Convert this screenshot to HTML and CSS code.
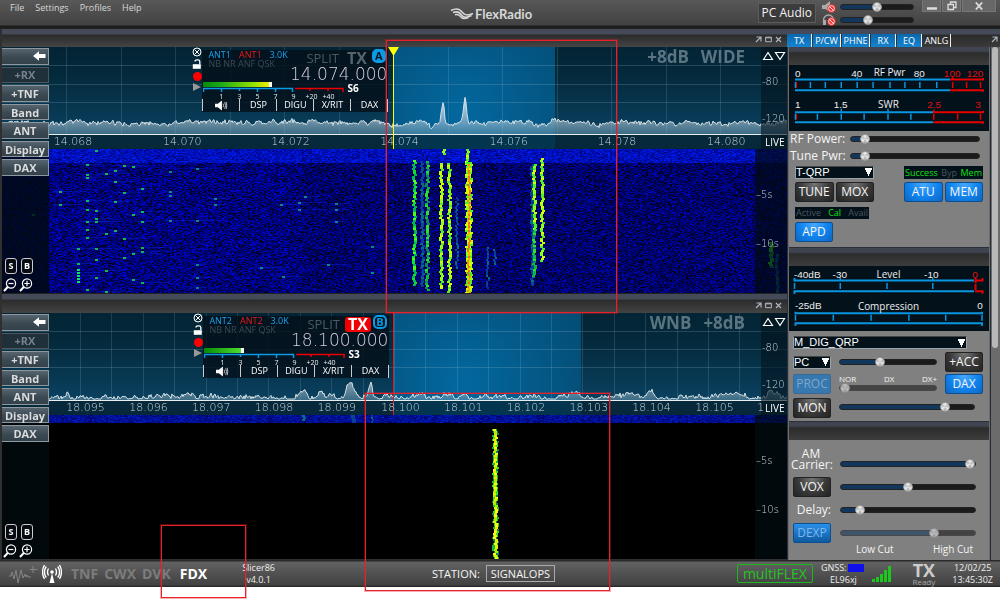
FILE: index.html
```
<!DOCTYPE html>
<html lang="en">
<head>
<meta charset="utf-8">
<title>FlexRadio</title>
<link rel="stylesheet" href="styles.css">
</head>
<body>
<svg class="defs" aria-hidden="true">
  <symbol id="i-pop" viewBox="0 0 7 7"><path d="M1.5 1H6v4.5M6 1 1 6" fill="none" stroke="currentColor" stroke-width="1.2"/></symbol>
  <symbol id="i-max" viewBox="0 0 7 7"><path d="M.6 1.2h5.8v4.5H.6zM.6 1.8h5.8" fill="none" stroke="currentColor"/></symbol>
  <symbol id="i-close" viewBox="0 0 7 7"><path d="M1 1l5 5M6 1 1 6" fill="none" stroke="currentColor" stroke-width="1.2"/></symbol>
  <symbol id="i-arrow" viewBox="0 0 13 10"><path d="M0 5 6 .3V3h6.5v4H6v2.700z" fill="#fff"/></symbol>
  <symbol id="i-x" viewBox="0 0 10 10"><circle cx="5" cy="5" r="4" fill="none" stroke="#fff"/><path d="M2.500 2.500l5 5M7.500 2.500l-5 5" stroke="#fff"/></symbol>
  <symbol id="i-lock" viewBox="0 0 10 10"><path d="M.8 5.200h8v4.600h-8z" fill="#fff"/><path d="M3 2.500Q3 .8 5 .8h1Q7.800.8 7.800 2.600V5" fill="none" stroke="#fff" stroke-width="1.300"/></symbol>
  <symbol id="i-spk" viewBox="0 0 14 12"><path d="M.5 4H3.500L8 .5v11L3.500 8H.5z" fill="#fff"/><path d="M9.300 4q1 2 0 4M11 2.500q2 3.500 0 7M12.600 2q1.400 4 0 8" fill="none" stroke="#ddd" stroke-width=".9"/></symbol>
  <symbol id="i-out" viewBox="0 0 14 14"><circle cx="8" cy="5.500" r="4.600" fill="none" stroke="#fff" stroke-width="1.200"/><path d="M5.500 5.500h5" stroke="#fff" stroke-width="1.200"/><path d="M4.700 9 1 13" stroke="#fff" stroke-width="2"/></symbol>
  <symbol id="i-in" viewBox="0 0 14 14"><circle cx="8" cy="5.500" r="4.600" fill="none" stroke="#fff" stroke-width="1.200"/><path d="M5.300 5.500h5.400M8 2.800v5.400" stroke="#fff" stroke-width="1.200"/><path d="M4.700 9 1 13" stroke="#fff" stroke-width="2"/></symbol>
  <symbol id="i-tri" viewBox="0 0 24 10"><path d="M1.500 8.500 6 1.500l4.500 7zM13.500 1.500h9L18 8.500z" fill="none" stroke="#fff" stroke-width="1.200"/></symbol>
  <symbol id="i-scale" viewBox="0 0 142 16">
    <path d="M.5 5V1.500h89V5M18.500 1v4M36.500 1v3M54.500 1v4M72.500 1v4" fill="none" stroke="#0a9be8" stroke-width="1.500"/>
    <path d="M92 1.500h48V5M107 1v3M125 1v3" fill="none" stroke="#e80000" stroke-width="1.500"/>
  </symbol>
  <symbol id="i-mute" viewBox="0 0 10 10"><circle cx="5" cy="5" r="4.600" fill="#e33"/><circle cx="5" cy="5" r="3.200" fill="none" stroke="#fff" stroke-width=".8"/><path d="M2.800 2.800l4.400 4.400" stroke="#fff"/></symbol>
</svg>

<div class="app">
  <header class="top">
    <nav class="menu"><a href="#">File</a><a href="#">Settings</a><a href="#">Profiles</a><a href="#">Help</a></nav>
    <div class="brand">
      <svg width="24" height="14" viewBox="0 0 24 14" fill="none" stroke="#d8d8d8" stroke-width="1.500"><path d="M1 3.500C6 1 10 2 12.500 5.500S18 9 23 6.500"/><path d="M3 5.500c4-1.500 6.500-.5 8.500 2.500s5 3 10 .5"/><path d="M5 7.800c3-.8 4.500.2 6 2.200s4 2 7.500.5"/></svg>
      <span>FlexRadio</span>
    </div>
    <div class="top-right">
      <button class="pc-audio">PC Audio</button>
      <div class="vols">
        <label class="vol"><svg width="14" height="12" viewBox="0 0 14 12" role="img" aria-label="Speaker"><path d="M0 4h3l5-4v11L3 8H0z" fill="#a9a9a9"/><use href="#i-mute" x="5" y="3" width="9" height="9"/></svg><input type="range" value="50" style="--v:50%"></label>
        <label class="vol"><svg width="14" height="12" viewBox="0 0 14 12" role="img" aria-label="Headphones"><path d="M1.500 8V6a5 5 0 0 1 10 0" fill="none" stroke="#a9a9a9" stroke-width="1.300"/><path d="M1 6h3v5H1z" fill="#a9a9a9"/><use href="#i-mute" x="5" y="3" width="9" height="9"/></svg><input type="range" value="36" style="--v:38%"></label>
      </div>
      <div class="win">
        <button aria-label="Minimize"><svg width="10" height="10"><path d="M0 7.500h10" stroke="#ddd" stroke-width="2.500"/></svg></button>
        <button aria-label="Restore"><svg width="10" height="10" fill="none" stroke="#ddd" stroke-width="1.300"><path d="M1 3.500h5.500v5H1zM3.500 3V1H9v5.500H7"/></svg></button>
        <button class="wide" aria-label="Close"><svg width="8" height="8"><path d="M.8.5l6.400 7M7.200.5.8 7.500" stroke="#ddd" stroke-width="1.800"/></svg></button>
      </div>
    </div>
  </header>

  <main class="main">
    <div class="pans">
      <section class="pan">
        <div class="bar"><svg><use href="#i-pop"/></svg><svg><use href="#i-max"/></svg><svg><use href="#i-close"/></svg></div>
        <div class="body">
          <canvas class="scope" data-pan="a"></canvas>
          <div class="side">
            <div class="keys"><button class="back" aria-label="Collapse"><svg width="13" height="10"><use href="#i-arrow"/></svg></button><button disabled>+RX</button><button>+TNF</button><button>Band</button><button>ANT</button><button>Display</button><button>DAX</button></div>
            <div class="zooms"><button class="sq">S</button><button class="sq">B</button><button class="mag" aria-label="Zoom out"><svg><use href="#i-out"/></svg></button><button class="mag" aria-label="Zoom in"><svg><use href="#i-in"/></svg></button></div>
          </div>
          <div class="notes"><span>+8dB</span><span>WIDE</span></div>
          <div class="db"><svg width="24" height="10"><use href="#i-tri"/></svg><span>-80</span><span>-120</span></div>
          <div class="axis">
            <span style="left:6.6%">14.068</span><span style="left:20.5%">14.070</span><span style="left:34.3%">14.072</span><span style="left:48.2%">14.074</span><span style="left:62.1%">14.076</span><span style="left:75.9%">14.078</span><span style="left:89.8%">14.080</span>
          </div>
          <div class="live">LIVE</div>
          <div class="times"><span>–5s</span><span>–10s</span></div>
          <div class="flag">
            <div class="flag-icons"><svg width="10" height="10"><use href="#i-x"/></svg><svg width="10" height="10"><use href="#i-lock"/></svg><i class="rec"></i><i class="play"></i></div>
            <div class="flag-main">
              <div class="flag-top">
                <div class="ants"><div><b class="blue">ANT1</b><b class="red">ANT1</b><b class="blue">3.0K</b></div><div class="dsp">NB NR ANF QSK</div></div>
                <span class="split">SPLIT</span><span class="tx">TX</span><span class="letter solid">A</span>
              </div>
              <div class="freq">14.074.000</div>
              <div class="smeter">
                <div class="gauge"><div class="level" style="width:48%"></div><svg width="142" height="6" viewBox="0 0 142 6"><use href="#i-scale" width="142" height="16"/></svg><div class="nums"><span>1</span><span>3</span><span>5</span><span>7</span><span>9</span><span class="w">+20</span><span class="w">+40</span></div></div>
                <strong>S6</strong>
              </div>
              <div class="flag-tabs"><button aria-label="Audio"><svg width="14" height="11"><use href="#i-spk"/></svg></button><button>DSP</button><button>DIGU</button><button>X/RIT</button><button>DAX</button></div>
            </div>
          </div>
        </div>
      </section>

      <section class="pan">
        <div class="bar"><svg><use href="#i-pop"/></svg><svg><use href="#i-max"/></svg><svg><use href="#i-close"/></svg></div>
        <div class="body">
          <canvas class="scope" data-pan="b"></canvas>
          <div class="side">
            <div class="keys"><button class="back" aria-label="Collapse"><svg width="13" height="10"><use href="#i-arrow"/></svg></button><button disabled>+RX</button><button>+TNF</button><button>Band</button><button>ANT</button><button>Display</button><button>DAX</button></div>
            <div class="zooms"><button class="sq">S</button><button class="sq">B</button><button class="mag" aria-label="Zoom out"><svg><use href="#i-out"/></svg></button><button class="mag" aria-label="Zoom in"><svg><use href="#i-in"/></svg></button></div>
          </div>
          <div class="notes"><span>WNB</span><span>+8dB</span></div>
          <div class="db"><svg width="24" height="10"><use href="#i-tri"/></svg><span>-80</span><span>-120</span></div>
          <div class="axis">
            <span style="left:8.2%">18.095</span><span style="left:16.2%">18.096</span><span style="left:24.2%">18.097</span><span style="left:32.2%">18.098</span><span style="left:40.2%">18.099</span><span style="left:48.3%">18.100</span><span style="left:56.3%">18.101</span><span style="left:64.3%">18.102</span><span style="left:72.3%">18.103</span><span style="left:80.3%">18.104</span><span style="left:88.3%">18.105</span><span style="left:96.2%">1</span>
          </div>
          <div class="live">LIVE</div>
          <div class="times"><span>–5s</span><span>–10s</span></div>
          <div class="flag">
            <div class="flag-icons"><svg width="10" height="10"><use href="#i-x"/></svg><svg width="10" height="10"><use href="#i-lock"/></svg><i class="rec"></i><i class="play"></i></div>
            <div class="flag-main">
              <div class="flag-top">
                <div class="ants"><div><b class="blue">ANT2</b><b class="red">ANT2</b><b class="blue">3.0K</b></div><div class="dsp">NB NR ANF QSK</div></div>
                <span class="split">SPLIT</span><span class="tx on">TX</span><span class="letter">B</span>
              </div>
              <div class="freq">18.100.000</div>
              <div class="smeter">
                <div class="gauge"><div class="level low" style="width:28%"></div><svg width="142" height="6" viewBox="0 0 142 6"><use href="#i-scale" width="142" height="16"/></svg><div class="nums"><span>1</span><span>3</span><span>5</span><span>7</span><span>9</span><span class="w">+20</span><span class="w">+40</span></div></div>
                <strong>S3</strong>
              </div>
              <div class="flag-tabs"><button aria-label="Audio"><svg width="14" height="11"><use href="#i-spk"/></svg></button><button>DSP</button><button>DIGU</button><button>X/RIT</button><button>DAX</button></div>
            </div>
          </div>
        </div>
      </section>
    </div>

    <aside class="rail">
      <div class="tabs"><button class="on">TX</button><button class="on">P/CW</button><button class="on">PHNE</button><button class="on">RX</button><button class="on">EQ</button><button>ANLG</button><svg><use href="#i-pop"/></svg></div>
      <div class="scroll">
        <div class="cards">
          <section class="card">
            <div class="cap"></div>
            <svg class="meter" viewBox="0 0 201 66">
              <g fill="none" stroke="#0a95e0" stroke-width="2">
                <path d="M6 14.500H162M6 25.500H162M6 47.500H145M6 57.500H145"/>
                <path d="M21.500 17v6M36.500 17v6M52.500 17v6M68.500 12v3M68.500 17v6M84.500 17v6M101.500 17v6M116.500 17v6M131.500 12v3M131.500 17v6M148.500 17v6M28.500 49v6M52.500 44v3M52.500 49v6M75.500 49v6M99.500 44v3M99.500 49v6M122.500 49v6M6.500 17v6M6.500 49v6" stroke-width="1.500"/>
              </g>
              <g fill="none" stroke="#e80000" stroke-width="2">
                <path d="M162 14.500H195V13M162 25.500H195V27M145 47.500H195V46M145 57.500H195V59"/>
                <path d="M164.500 12v3M164.500 17v6M178.500 17v6M192.500 17v6M145.500 45v3M145.500 49v6M169.500 49v6M192.500 49v6" stroke-width="1.500"/><path d="M7.500 17v6M7.500 49v6" stroke-width="1"/>
              </g>
              <g class="num"><text x="6" y="12">0</text><text x="68" y="12" class="m">40</text><text x="101" y="11" class="m name">RF Pwr</text><text x="131" y="12" class="m">80</text><text x="164" y="12" class="m r">100</text><text x="187" y="12" class="m r">120</text>
              <text x="6" y="43">1</text><text x="52" y="43" class="m">1.5</text><text x="100" y="43" class="m name">SWR</text><text x="146" y="43" class="m r">2.5</text><text x="190" y="43" class="m r">3</text></g>
            </svg>
            <div class="ctl c1">
              <label class="lr">RF Power:<input type="range" value="8" style="--v:10%"></label>
              <label class="lr">Tune Pwr:<input type="range" value="8" style="--v:10%"></label>
              <div class="pairs">
                <div class="col"><select aria-label="TX profile"><option>T-QRP</option></select><div class="btns"><button class="btn">TUNE</button><button class="btn">MOX</button></div></div>
                <div class="col"><div class="status"><span class="g">Success</span><span>Byp</span><span class="g">Mem</span></div><div class="btns"><button class="btn b">ATU</button><button class="btn b">MEM</button></div></div>
              </div>
              <div class="status short"><span>Active</span><span class="g">Cal</span><span>Avail</span></div>
              <button class="btn b">APD</button>
            </div>
          </section>
          <section class="card">
            <div class="cap"></div>
            <svg class="meter" viewBox="0 0 201 66">
              <g fill="none" stroke="#0a95e0" stroke-width="2">
                <path d="M5.500 12v2.500H186M5.500 28v-2.500H186M6.500 46v1.500H194V46M6.500 60v-2.500H194V60"/>
                <path d="M5.500 17v6M51.500 12v3M51.500 17v6M98.500 17v6M144.500 12v3M144.500 17v6M6.500 49v6M44.500 49v6M82.500 49v6M120.500 49v6M157.500 49v6M194 49v6" stroke-width="1.500"/>
              </g>
              <path d="M187.500 12v5M187 14.500h7.500V12M187.500 18v6M187 25.500h7.500V28" fill="none" stroke="#e80000" stroke-width="2"/>
              <g class="num"><text x="5" y="12">-40dB</text><text x="51" y="12" class="m">-30</text><text x="100" y="12" class="m name">Level</text><text x="143" y="12" class="m">-10</text><text x="187" y="12" class="m r">0</text>
              <text x="6" y="43">-25dB</text><text x="100" y="44" class="m name">Compression</text><text x="192" y="43" class="m">0</text></g>
            </svg>
            <div class="ctl c2">
              <select class="mic" aria-label="Mic profile"><option>M_DIG_QRP</option></select>
              <div class="grid">
                <select aria-label="Mic input"><option>PC</option></select>
                <input type="range" value="41" style="--v:41%" aria-label="Mic level">
                <button class="btn">+ACC</button>
                <button class="btn b dim">PROC</button>
                <div class="steps"><div><span>NOR</span><span>DX</span><span>DX+</span></div><input type="range" value="0" style="--v:0%" aria-label="Processor" disabled></div>
                <button class="btn b">DAX</button>
                <button class="btn mon">MON</button>
                <input class="two" type="range" value="81" style="--v:79%" aria-label="Monitor level">
              </div>
            </div>
          </section>
          <section class="card">
            <div class="cap"></div>
            <div class="ctl c3">
              <label for="am" class="am">AM<br>Carrier:</label><input id="am" class="low" type="range" value="100" style="--v:98%">
              <button class="btn">VOX</button><input type="range" value="50" style="--v:50%" aria-label="VOX level">
              <label for="dl">Delay:</label><input id="dl" type="range" value="11" style="--v:13%">
              <button class="btn b dim2">DEXP</button><input type="range" value="71" style="--v:69%" aria-label="DEXP level" disabled>
              <div class="cuts"><span>Low Cut</span><span>High Cut</span></div>
            </div>
          </section>
        </div>
        <div class="thumb"></div>
      </div>
    </aside>
  </main>

  <footer class="foot">
    <div class="f-left">
      <svg width="29" height="18" viewBox="0 0 29 18" fill="none" stroke="#858585"><path d="M0 11h2l1-4 2 7 2-9 2 13 3-13 2 8 2-4 1 3 1-2 1 2h3"/><path d="M24 1v7M20.500 4.500h8"/></svg>
      <svg width="20" height="20" viewBox="0 0 20 20" fill="none" stroke="#fff" stroke-width="1.400"><circle cx="10" cy="8" r="1.800" fill="#fff" stroke="none"/><path d="M10 9 7.500 19h5z" fill="#fff" stroke="none"/><path d="M6.500 4.500q-2 3.500 0 7M13.500 4.500q2 3.500 0 7M4.200 2.500q-3.500 5.500 0 11M15.800 2.500q3.500 5.500 0 11M2.500 1q-4 7 0 14M17.500 1q4 7 0 14"/></svg>
      <button>TNF</button><button>CWX</button><button>DVK</button><button class="on">FDX</button>
      <div class="ver">Slicer86<br>v4.0.1</div>
    </div>
    <div class="station">STATION: <span>SIGNALOPS</span></div>
    <div class="f-right">
      <button class="multi">multiFLEX</button>
      <div class="gnss"><div>GNSS:<i></i></div><div class="loc">EL96xj</div></div>
      <svg width="20" height="16" viewBox="0 0 20 16" fill="#1bc81b"><path d="M0 13h3v3H0zM4 11h3v5H4zM8 8h3v8H8zM12 4h3v12h-3zM16 0h3v16h-3z"/></svg>
      <div class="txr"><b>TX</b><span>Ready</span></div>
      <div class="clock">12/02/25<br>13:45:30Z</div>
    </div>
  </footer>
  <div class="mark mark-band"></div>
  <div class="mark mark-station"></div>
  <div class="mark mark-fdx"></div>
</div>
<script src="scope.js"></script>
</body>
</html>
```
FILE: styles.css
```
* { box-sizing: border-box; }
html { background: #fff; }
body { margin: 0; min-height: 100vh; background: #fff; font-family: "Open Sans", "Noto Sans", sans-serif; color: #eee; }
button, select, input { font-family: inherit; margin: 0; padding: 0; }
button { border: 0; background: none; color: inherit; }
svg { display: block; flex: none; }
.defs { position: absolute; width: 0; height: 0; }
.app { position: relative; background: #303030; }

/* header */
.top { display: grid; grid-template-columns: 45% auto 1fr; height: 29px; background: linear-gradient(#585858, #424242 86%, #1a1a1a 90%, #222); }
.menu { display: flex; gap: 11px; padding: 1px 0 0 10px; font-size: 9px; line-height: 13px; }
.menu a { color: #d8d8d8; text-decoration: none; }
.brand { display: flex; align-items: center; gap: 1px; height: 28px; font: 700 13px/16px Lato, sans-serif; color: #d8d8d8; }
.top-right { display: flex; justify-content: flex-end; align-items: flex-start; padding-right: 4px; }
.pc-audio { height: 20px; margin: 3px 6px 0 0; padding: 0 3px; border: 1px solid #5c5c5c; background: #3c3c3c; font-size: 12px; line-height: 16px; color: #f2f2f2; white-space: nowrap; }
.vols { display: grid; gap: 2px; padding-top: 1px; }
.vol { display: flex; align-items: center; gap: 4px; height: 11px; }
.win { display: flex; gap: 1px; margin-left: 8px; }
.win button { display: flex; align-items: center; justify-content: center; width: 19px; height: 12px; background: #686868; border: 1px solid #777; border-top: 0; }
.win .wide { width: 34px; }

/* sliders */
input[type=range] { -webkit-appearance: none; appearance: none; display: block; width: 100%; min-width: 0; height: 10px; background: transparent; }
.vol input[type=range] { width: 74px; }
input[type=range]::-webkit-slider-runnable-track { height: 6px; border-radius: 3px; border: 1px solid #222; background: linear-gradient(90deg, #12375c var(--v), #1b1b1b var(--v)); }
input[type=range]::-webkit-slider-thumb { -webkit-appearance: none; width: 10px; height: 10px; margin-top: -3px; border-radius: 50%; border: 1px solid #999; background: conic-gradient(#eee, #bbb, #e6e6e6, #aaa, #eee, #bbb, #eee); }
input[type=range]:disabled { opacity: .6; }

.main { display: grid; grid-template-columns: 1fr 213px; height: 531px; }
.pans { padding-left: 2px; min-width: 0; }

/* panadapter */
.bar { display: flex; justify-content: flex-end; align-items: center; gap: 3px; height: 18px; padding: 3px 5px 0 0; color: #aeb4c0; background: linear-gradient(#454a58 5px, #2b2b2b 6px, #444); }
.pan + .pan .bar { height: 20px; border-top: 1px solid #222; }
.bar svg { width: 7px; height: 7px; }
.body { position: relative; display: grid; grid-template-columns: 47px 1fr 31px; grid-template-rows: 87px 15px 144px; overflow: hidden; }
.scope { position: absolute; inset: 0; width: 100%; height: 100%; }
.side { position: relative; grid-area: 1 / 1 / 4 / 2; display: flex; flex-direction: column; justify-content: space-between; }
.keys { display: flex; flex-direction: column; gap: 2px; height: 129px; padding-top: 1px; }
.keys button { flex: 1; border: 1px solid #8d979e; border-left: 0; background: linear-gradient(#56646f, #3b4953 55%, #33414b); color: #dcdcdc; font-weight: 700; font-size: 11px; line-height: 13px; }
.keys button:disabled { color: #75828b; border-color: #4c5860; background: #1f303a; }
.keys .back { display: flex; justify-content: flex-end; align-items: center; padding-right: 2px; }
.zooms { display: grid; grid-template-columns: 12px 12px; gap: 4px; padding: 0 0 1px 3px; }
.sq { height: 16px; border: 1px solid #ccc; border-radius: 3px; background: #080c12; color: #fff; font-size: 9px; font-weight: 700; line-height: 12px; }
.mag svg { width: 14px; height: 14px; margin-left: -2px; }
.notes { position: relative; grid-area: 1 / 2; display: flex; justify-content: flex-end; gap: 12px; padding-right: 11px; color: #5b7482; font-size: 17px; font-weight: 700; line-height: 20px; }
.db, .times, .axis { font-family: "DejaVu Sans Light", "DejaVu Sans", sans-serif; font-weight: 200; font-size: 10px; line-height: 12px; color: #c9d4da; white-space: nowrap; }
.db { position: relative; grid-area: 1 / 3; padding: 4px 0 0 6px; display: flex; flex-direction: column; }
.db span { margin-top: 15px; }
.db span + span { margin-top: 25px; }
.axis { position: relative; grid-area: 2 / 1 / 3 / 4; font-size: 11px; }
.axis span { position: absolute; top: 2px; }
.live { position: relative; grid-area: 2 / 3; padding-left: 9px; font-size: 10px; line-height: 16px; color: #fff; }
.times { position: relative; grid-area: 3 / 3; display: flex; flex-direction: column; gap: 37px; padding-top: 40px; }

/* slice flag */
.flag { position: absolute; left: 24%; top: 0; display: flex; width: 198px; }
.pan + .pan .flag { margin-left: 1px; }
.flag-icons { display: flex; flex-direction: column; align-items: center; gap: 2px; width: 10px; margin-left: 2px; }
.rec { width: 9px; height: 9px; margin-top: 1px; border-radius: 50%; background: #f00; }
.play { border: 4px solid transparent; border-left: 8px solid #999; border-right: 0; }
.flag-main { flex: 1; background: linear-gradient(transparent 3px, rgba(4, 16, 26, .82) 3px); }
.flag-top { display: flex; align-items: flex-start; height: 20px; padding-left: 6px; }
.ants { width: 98px; font-size: 9px; line-height: 9px; white-space: nowrap; padding-top: 3px; }
.ants b { font-weight: 400; margin-right: 8px; }
.blue { color: #1aa3ee; }
.red { color: #f01818; }
.dsp { color: #3c4a54; }
.split { font-size: 13px; line-height: 22px; color: #4d5a63; }
.tx { margin: 3px 5px 0 8px; font-size: 16px; font-weight: 700; line-height: 17px; color: #56646e; }
.tx.on { margin: 4px 2px 0 5px; padding: 0 3px; border-radius: 3px; background: #f00000; color: #fff; line-height: 15px; }
.letter { width: 14px; height: 14px; margin-top: 2px; border: 2px solid #0a9be8; border-radius: 5px; color: #0a9be8; background: #06141e; font-size: 11px; font-weight: 700; line-height: 10px; text-align: center; }
.letter.solid { background: #0a9be8; color: #04141e; }
.freq { padding-right: 1px; text-align: right; font: 200 17px/15px "DejaVu Sans Light", "DejaVu Sans", sans-serif; color: #d9cfe4; }
.smeter { display: flex; gap: 2px; padding-left: 1px; height: 17px; }
.gauge { width: 142px; }
.level { height: 5px; border-right: 3px solid #fff; background: linear-gradient(90deg, #078a07, #18a818 25%, #8fe000 75%, #f0f000); }
.level.low { background: linear-gradient(90deg, #078a07, #4ddc30); }
.smeter strong { font-size: 10px; line-height: 12px; color: #fff; }
.nums { display: grid; grid-template-columns: repeat(5, 18px) 18px 16px; padding-left: 9px; font-size: 7px; line-height: 8px; text-align: center; }
.flag-tabs { display: grid; grid-template-columns: repeat(5, 1fr); height: 13px; border-right: 1px solid #ccc; }
.flag-tabs button { display: flex; align-items: center; justify-content: center; height: 12px; border-left: 1px solid #ccc; font-size: 9px; line-height: 12px; color: #fff; }

/* right rail */
.rail { display: flex; flex-direction: column; min-width: 0; min-height: 0; background: #333; }
.tabs { display: flex; align-items: stretch; gap: 1px; height: 18px; padding: 5px 2px 0 0; background: linear-gradient(#454a58 5px, #2b2b2b 6px, #3a3a3a); }
.tabs button { flex: 0 0 auto; width: 25px; border-right: 1px solid #eee; font-size: 9px; line-height: 12px; color: #fff; }
.tabs button:nth-child(2), .tabs button:nth-child(3), .tabs button:nth-child(6) { width: 28px; }
.tabs .on { background: linear-gradient(#0a68ae, #1583cf); }
.tabs svg { width: 7px; height: 7px; margin: 2px 0 0 auto; color: #aeb4c0; }
.scroll { display: flex; flex: 1; min-height: 0; background: #6b6b6b; }
.cards { flex: 1; min-width: 0; overflow: hidden; padding: 0 1px; border-right: 1px solid #26303a; border-left: 1px solid #26303a; }
.thumb { width: 6px; height: 301px; margin: 0 2px 0 1px; border-radius: 3px; background: #b8b8b8; }
.card + .card { border-top: 1px solid #2a303a; }
.cap { height: 18px; background: linear-gradient(#3f4450 4px, #2c2c2c 6px, #3d3d3d); }
.meter { width: 100%; background: #03111a; }
.num { font: 10px "Liberation Sans", sans-serif; fill: #eee; }
.name { font-family: "Open Sans", sans-serif; }
.m { text-anchor: middle; }
.r { fill: #e01010; }
.ctl { background: #808080; color: #f4f4f4; }
.c1 { padding: 0 6px 5px; }
.lr { display: grid; grid-template-columns: 60px 1fr; align-items: center; height: 16px; margin-right: 3px; margin-left: -5px; font-size: 12px; line-height: 16px; white-space: nowrap; }
.lr:first-child { height: 17px; }
.pairs { display: flex; justify-content: space-between; padding-top: 2px; }
.col { display: grid; gap: 3px; width: 79px; }
.btns { display: grid; grid-template-columns: 1fr 1fr; gap: 2px; }
.btn { display: block; height: 20px; width: 100%; min-width: 0; border: 1px solid #222; border-radius: 2px; background: radial-gradient(ellipse at 50% 0, #777, #3a3a3a 55%, #222); color: #f6f6f6; font-size: 12px; line-height: 16px; white-space: nowrap; }
.btn.b { border-color: #0c4f90; background: radial-gradient(ellipse at 50% 0, #48aaff, #0f83ee 55%, #0e66c0); }
.btn.dim { background: #3679b0; border-color: #3a6a94; color: #7fa6c8; }
.btn.dim2 { color: #7db8ee; background: linear-gradient(#2a90e8, #0f5a9f); }
.c1 > .btn { width: 38px; }
select { display: block; width: 100%; height: 13px; border: 1px solid #98a2a8; border-top-color: #444; border-radius: 0; -webkit-appearance: none; appearance: none; color: #fff; font: 11px/11px "Liberation Sans", sans-serif; background: #03111a conic-gradient(from -27deg at 50% 100%, #fff 54deg, transparent 0) no-repeat right 1px center / 7px 8px; }
.status { display: flex; justify-content: space-between; padding: 0 1px; height: 13px; background: #03111a; color: #4a555c; font-size: 9px; line-height: 13px; }
.status .g { color: #10e010; }
.status.short { width: 74px; height: 12px; margin: 5px 0 3px; line-height: 12px; }
.c2 { padding: 5px 6px 3px 4px; }
.c2 .mic { width: 174px; margin-bottom: 3px; }
.grid { display: grid; grid-template-columns: 38px 1fr 38px; column-gap: 8px; row-gap: 2px; align-items: center; }
.two { grid-column: 2 / 4; }
.grid input.two { width: calc(100% - 8px); }
.mon { margin-top: 2px; }
.steps div { display: flex; justify-content: space-between; font-size: 8px; line-height: 8px; }
.c3 { display: grid; grid-template-columns: 38px 1fr; align-items: center; gap: 4px 9px; padding: 4px 13px 20px 4px; font-size: 12px; text-align: right; }
.c3 label { line-height: 18px; white-space: nowrap; }
.c3 .am { display: block; height: 29px; margin-left: -2px; padding-top: 4px; line-height: 11px; text-align: center; }
.c3 .low { align-self: end; margin-bottom: 4px; }
.cuts { grid-column: 2; display: flex; justify-content: space-between; margin: -5px 3px 0 16px; font-size: 10px; line-height: 14px; }

/* footer */
.foot { display: grid; grid-template-columns: 43.2% 1fr auto; align-items: center; height: 27px; background: linear-gradient(#2a2a2a 1px, #626262 2px, #414141 92%, #222); }
.f-left { display: flex; align-items: center; padding-left: 9px; }
.f-left button { margin-left: 6px; font-size: 14px; font-weight: 700; line-height: 20px; color: #7c7c7c; }
.f-left svg + svg { margin: 0 3px 0 4px; }
.f-left .on { color: #fff; margin-left: 9px; }
.ver { margin-left: 35px; font-size: 9px; line-height: 12px; text-align: center; }
.station { font-size: 11px; line-height: 16px; color: #f4f4f4; white-space: nowrap; }
.station span { display: inline-block; margin-left: 3px; padding: 0 4px; border: 1px solid #aaa; line-height: 15px; }
.f-right { display: flex; align-items: center; padding-right: 7px; }
.multi { height: 19px; padding: 0 5px; border: 1px solid #1bb81b; border-radius: 2px; color: #1fc81f; font-size: 14px; line-height: 17px; }
.gnss { margin: 0 8px; font-size: 9px; line-height: 12px; }
.gnss div { display: flex; align-items: center; gap: 2px; }
.gnss .loc { padding-left: 9px; }
.gnss i { width: 16px; height: 8px; background: #1010e8; }
.txr { display: grid; justify-items: center; margin: 0 17px 0 20px; color: #ccc; font-size: 8px; line-height: 8px; }
.txr b { font-size: 18px; line-height: 16px; }
.txr span { color: #a8a8a8; }
.clock { font-size: 9px; line-height: 12px; text-align: center; }

/* highlighted regions */
.mark { position: absolute; z-index: 5; border: 1px solid #e8202a; outline: 1px solid rgba(232, 32, 42, .35); pointer-events: none; }
.mark-band { left: 38.6%; top: 40px; width: 23.1%; height: 273px; }
.mark-station { left: 36.5%; top: 393px; width: 24.5%; height: 198px; }
.mark-fdx { left: 16.1%; top: 525px; width: 8.5%; height: 73px; }
```
FILE: scope.js
```
// Draws spectrum and waterfall. X positions are given on a 785-unit wide scale.
const PANS = {
  a: {
    seed: 7, base: 76, jitter: 3, gridX: [64, 54.5], gridY: [18, 37, 55], band: [392, 553], marker: '#ffff00', arrow: true,
    peaks: [[441, 23, 2], [463, 23, 2], [429, -6, 2], [552, 4, 4], [536, -3, 4]],
    burst: 14, bottom: 145,
    lines: [[411, 11, 137, 3, 'g'], [419, 12, 138, 3, 't'], [424, 12, 141, 3, 'gd'], [438, 14, 140, 3, 'y'], [446, 14, 145, 3, 'y'],
      [441, 0, 5, 3, 'y'], [464, 0, 15, 3, 'y'], [464, 13, 145, 6, 'y'], [466, 15, 145, 2, 'o'], [454, 48, 120, 2, 't'], [485, 98, 140, 2, 't'], [492, 100, 115, 2, 't'],
      [529, 15, 136, 3, 't'], [531, 15, 80, 3, 'y'], [531, 80, 128, 3, 'gd'], [539, 9, 113, 3, 'y'],
      [767, 93, 118, 4, 'gd'], [774, 105, 145, 3, 't']]
  },
  b: {
    seed: 21, base: 84, jitter: 4, gridX: [78, 31.4], gridY: [18, 36, 54], band: [392, 579], marker: '#e01c24', arrow: false,
    peaks: [[301, 6, 5], [320, 3, 4], [348, 12, 5], [369, 13, 2], [383, 2, 3], [648, 5, 3], [768, 6, 7], [182, 3, 5], [66, 3, 2]],
    burst: 8, bottom: 8,
    lines: [[349, 0, 8, 4, 't'], [369, 0, 8, 2, 't'], [301, 0, 5, 3, 't'], [491, 14, 145, 5, 'gd'], [492, 14, 145, 3, 'yy']]
  }
};
const DOTS = [[57,42],[57,55],[84,15],[84,25],[84,28],[84,51],[84,60],[84,72],[84,80],[84,88],[84,140],[93,1],[93,61],[93,69],[93,72],[93,99],[93,110],[93,128],
  [75,99],[75,114],[75,123],[75,126],[103,24],[103,84],[103,121],[103,142],[112,21],[112,32],[112,52],[112,81],[121,16],[121,43],[121,89],[121,108],[130,17],[130,65],[130,104],[130,130],
  [139,39],[139,62],[139,72],[139,98],[139,102],[139,133],[167,22],[167,42],[167,46],[167,71],[194,19],[194,71],[194,115],[194,128],[194,138],[212,49],[212,55],
  [296,53],[296,60],[302,47],[333,54],[333,60],[333,72],[258,118],[369,97],[369,123],[325,115],[280,127],[278,55],[30,65]];
const COLORS = { g: ['#10e030', '#50ff10', '#00b850'], gd: ['#10b840', '#30e030', '#108060'], t: ['#0a4890', '#0a6a80', '#0838a0'], y: ['#90ff10', '#50f020', '#d0ff00'], yy: ['#e8f000', '#ffff10', '#b0ee00'], o: ['#ff8a00', '#ffb000', '#ff6a10'] };

function rng(seed) {
  let s = seed * 7919;
  return () => { s = (s * 1664525 + 1013904223) % 4294967296; return s / 4294967296; };
}

function draw(canvas) {
  const p = PANS[canvas.dataset.pan], r = rng(p.seed);
  const w = canvas.width = canvas.clientWidth, h = canvas.height = canvas.clientHeight;
  const c = canvas.getContext('2d'), k = w / 785, top = 102, floor = 87;
  const rect = (x, y, ww, hh, f) => { c.fillStyle = f; c.fillRect(x, y, ww, hh); };
  let g = c.createLinearGradient(0, 0, 0, top);
  g.addColorStop(0, '#032434'); g.addColorStop(.3, '#042a3d'); g.addColorStop(.85, '#0a4160'); g.addColorStop(.86, '#06293b'); g.addColorStop(1, '#06283a');
  rect(0, 0, w, top, g);
  g = c.createRadialGradient(460 * k, 70, 10, 460 * k, 70, 150);
  g.addColorStop(0, '#03669c'); g.addColorStop(1, '#044a70');
  rect(p.band[0] * k, 0, (p.band[1] - p.band[0]) * k, floor, g);
  rect(p.band[0] * k, floor, (p.band[1] - p.band[0]) * k, 15, '#04354e');
  for (let x = p.gridX[0]; x < 755; x += p.gridX[1]) rect(Math.round(x * k), 0, 1, floor, 'rgba(170,200,220,.17)');
  for (const y of p.gridY) rect(0, y, w, 1, 'rgba(170,200,220,.2)');

  const pts = [];
  let drift = 0;
  for (let x = 0; x <= w; x++) {
    drift = drift * .75 + (r() - .5) * p.jitter;
    let y = p.base - drift - (r() - .5) * 3;
    for (const [px, ph, pw] of p.peaks) y -= ph * Math.exp(-(((x / k - px) / pw) ** 2));
    pts.push([x, Math.min(y, 86)]);
  }
  c.beginPath(); c.moveTo(0, floor); pts.forEach(q => c.lineTo(q[0], q[1])); c.lineTo(w, floor); c.closePath();
  g = c.createLinearGradient(0, 50, 0, floor);
  g.addColorStop(0, 'rgba(235,245,250,.9)'); g.addColorStop(.7, 'rgba(170,195,210,.6)'); g.addColorStop(1, 'rgba(120,160,180,.45)');
  c.fillStyle = g; c.fill();
  c.beginPath(); pts.forEach(q => c.lineTo(q[0], q[1])); c.strokeStyle = '#d4e0e4'; c.lineWidth = 1; c.stroke();
  rect(0, floor, w, 1, '#e8eef0');

  rect(0, top, w, h - top, '#000');
  for (let y = 0; y < p.bottom; y++) {
    for (let x = 0; x < w; x += 2) {
      const n = (r() + r()) / 2, bright = y < p.burst;
      const b = bright ? 110 + n * 150 : 10 + n * (x < 300 * k ? 220 : 190);
      const q = bright ? n * 32 : n * 6;
      const f = canvas.dataset.pan === 'b' ? .8 : 1;
      rect(x, top + y, 2, 1, `rgb(0,${q | 0},${Math.min(255, b * f) | 0})`);
    }
  }
  if (canvas.dataset.pan === 'a') {
    for (const [x, y] of DOTS) {
      rect((x - 6) * k, top + y, 14 + r() * 22, 1, 'rgba(0,50,230,.3)');
      rect(x * k, top + y, 3, 2, x < 145 ? '#10b85a' : '#0b8590');
    }
    for (let i = 0; i < 5; i++) rect(75 * k, top + 120 + i * 3, 3, 2, '#10e060');
  }
  for (const [x, y0, y1, lw, col] of p.lines) {
    const q = rng(Math.round(x));
    for (let y = y0; y < y1; y += 2) {
      const off = Math.round(q() * 2 - 1), pick = COLORS[col][Math.floor(q() * 3)];
      rect(Math.round(x * k) + off, top + y, lw, 2, pick);
    }
  }
  rect(0, top, 47 * k, h - top, 'rgba(0,10,14,.8)');
  rect(753 * k, top, w, h - top, 'rgba(0,10,14,.68)');
  rect(759 * k, 0, w, top, 'rgba(4,18,28,.6)');
  if (canvas.dataset.pan === 'b') { rect(0, top + 8, 47, h, '#01090d'); rect(753 * k, top + 8, w, h, '#01090d'); }
  rect(Math.round(391 * k), 0, 1, top, p.marker);
  if (p.arrow) { c.fillStyle = '#ff0'; c.beginPath(); c.moveTo(386 * k, 0); c.lineTo(397 * k, 0); c.lineTo(391.5 * k, 9); c.fill(); }
}
const all = () => document.querySelectorAll('.scope').forEach(draw);
all();
addEventListener('resize', all);
```
